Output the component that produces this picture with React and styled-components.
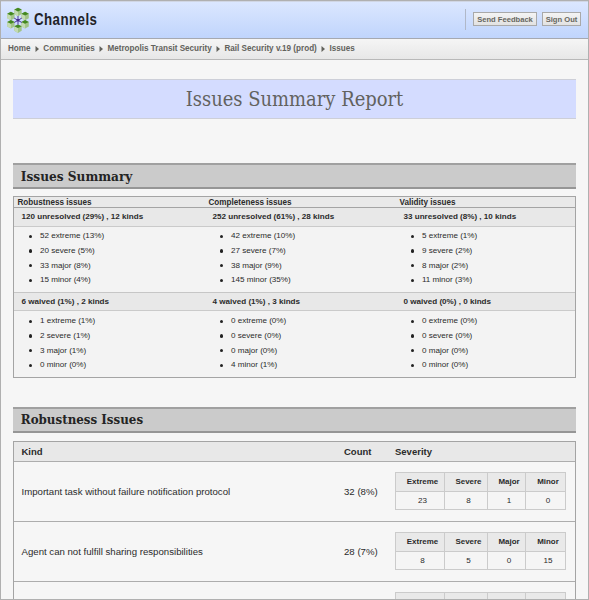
import React from 'react';
import styled, { createGlobalStyle } from 'styled-components';

const sans = '"Liberation Sans", Arial, sans-serif';
const serif = '"DejaVu Serif Condensed", "DejaVu Serif", serif';

const GlobalStyle = createGlobalStyle`
  * { box-sizing: border-box; }
  body { margin: 0; font-family: ${sans}; color: #2b2b2b; background: #f6f6f6; overflow: hidden; }
`;

const Page = styled.div`
  height: 600px;
  overflow: hidden;
  border: 1px solid #b0b0b0;
  background: #f6f6f6;
`;

const Header = styled.header`
  display: flex;
  align-items: center;
  height: 38px;
  padding: 0 7px 0 5px;
  border-top: 1px solid #d0d6e4;
  border-bottom: 1px solid #a6a9b0;
  background: linear-gradient(#dbe7ff, #c0d5fc);
`;

const Brand = styled.h1`
  margin: 0 auto 0 4px;
  width: 64px;
  font: bold 17px/20px ${sans};
  letter-spacing: 0.6px;
  color: #1f2328;
  transform: scaleX(0.78);
  transform-origin: 0 50%;
`;

const Actions = styled.div`
  display: flex;
  align-items: center;
  gap: 5px;
  height: 21px;
  margin-bottom: 2px;
  padding-left: 7px;
  border-left: 1px solid #b0b8c8;
`;

const Button = styled.button`
  width: ${p => p.$width}px;
  height: 14px;
  padding: 0;
  border: 1px solid #a9a9a9;
  background: linear-gradient(#f4f4f4, #e2e2e2);
  color: #66665f;
  font: bold 7.6px/11px ${sans};
  white-space: nowrap;
`;

const Breadcrumbs = styled.nav`
  display: flex;
  align-items: center;
  height: 21px;
  padding-left: 7px;
  border-bottom: 1px solid #b8b8b8;
  background: linear-gradient(#f5f5f5, #e7e7e7);
  color: #62625c;
  font: bold 8.15px/12px ${sans};
  white-space: nowrap;
`;

const Arrow = styled.svg`
  width: 4px;
  height: 6px;
  margin: 0 4.7px 0 4px;
  fill: #62625c;
`;

const Content = styled.main`
  padding: 19px 12px 0;
`;

const Title = styled.h2`
  height: 40px;
  margin: 0 0 44px;
  border: 1px solid #cdcfd8;
  border-width: 1px 0;
  background: #d4dcff;
  color: #62625e;
  font: 19.95px/39px ${serif};
  text-align: center;
`;

const SectionTitle = styled.h3`
  height: 26px;
  margin: 0 0 ${p => p.$gap}px;
  padding-left: 7.8px;
  border: solid #969696;
  border-width: 2px 0;
  border-top-color: #a0a0a0;
  background: #cbcbcb;
  color: #242424;
  font: bold ${p => p.$size}px/22px ${serif};
`;

const Summary = styled.section`
  height: 182px;
  margin-bottom: 29px;
  border: 1px solid #a4a4a4;
  background: #f3f3f3;
`;

const Columns = styled.div`
  display: grid;
  grid-template-columns: 191px 191px 1fr;
`;

const SummaryHead = styled(Columns)`
  height: 11px;
  padding-left: 3.5px;
  border-bottom: 1px solid #a4a4a4;
  background: #e9e9e9;
  font: bold 8.15px/11px ${sans};
`;

const Totals = styled(Columns)`
  height: 19px;
  padding-left: 7.5px;
  border-bottom: 1px solid #cacaca;
  border-top: ${p => (p.$divided ? '1px solid #c6c6c6' : '0')};
  background: #e8e8e8;
  font: bold 8.08px/18px ${sans};
`;

const Breakdown = styled(Columns)`
  height: ${p => p.$height}px;
  padding-top: ${p => p.$top}px;
`;

const List = styled.ul`
  margin: 0;
  padding: 0 0 0 15px;
  list-style: none;
`;

const Item = styled.li`
  display: flex;
  align-items: center;
  gap: 7.5px;
  height: 14.67px;
  font: 8.1px/14px ${sans};

  &::before {
    content: '';
    width: 3.4px;
    height: 3.4px;
    border-radius: 50%;
    background: #222;
  }
`;

const IssueTable = styled.section`
  border: solid #a4a4a4;
  border-width: 1px 1px 0;
`;

const IssueRow = styled.div`
  display: grid;
  grid-template-columns: 322.5px 51px 1fr;
  align-items: center;
  height: 60px;
  padding-left: 7.5px;
  border-bottom: 1px solid #adadad;
  font: 9.65px/14px ${sans};
`;

const IssueHead = styled(IssueRow)`
  height: 20px;
  background: #e8e8e8;
  font-weight: bold;
  font-size: 9.5px;
`;

const SeverityTable = styled.div`
  display: grid;
  grid-template-columns: 49px 43px 38px 40px;
  grid-template-rows: 19px 18px;
  width: 171px;
  margin-bottom: 1px;
  border: solid #cbcbcb;
  border-width: 1px 0 0 1px;
`;

const Cell = styled.span`
  padding-left: 5px;
  border: solid #cbcbcb;
  border-width: 0 1px 1px 0;
  background: ${p => (p.$head ? '#e9e9e9' : '#f5f5f5')};
  font: ${p => (p.$head ? 'bold 7.95px' : '8.1px')}/18px ${sans};
  text-align: center;
`;

const LogoMark = styled.svg`
  width: 24px;
  height: 27px;
`;

const cubes = [[12, 4.9], [4.9, 9], [19.1, 9], [4.9, 17.2], [19.1, 17.2], [12, 21.6]];

const Logo = () => (
  <LogoMark viewBox="0 0 24 27">
    {cubes.map(([x, y]) => (
      <g key={`${x}-${y}`} transform={`translate(${x} ${y})`}>
        <path d="M0-4.2 3.7-2.3V2.2L0 4.3-3.7 2.2v-4.5z" fill="#a1c488" />
        <path d="M-3.7-2.3 0-.5V4.3l-3.7-2.1z" fill="#c3dab2" />
        <path d="M0-4.2 3.7-2.3 0-.5-3.7-2.3z" fill="#438821" />
      </g>
    ))}
    <path d="M12 9v8.6M8.2 11.1l7.6 4.4M15.8 11.1l-7.6 4.4" stroke="#4b359c" strokeWidth="1" />
    <circle cx="12" cy="13.3" r="1.3" fill="#40288d" />
  </LogoMark>
);

const crumbs = ['Home', 'Communities', 'Metropolis Transit Security', 'Rail Security v.19 (prod)', 'Issues'];

const unresolved = {
  totals: ['120 unresolved (29%) , 12 kinds', '252 unresolved (61%) , 28 kinds', '33 unresolved (8%) , 10 kinds'],
  lists: [
    ['52 extreme (13%)', '20 severe (5%)', '33 major (8%)', '15 minor (4%)'],
    ['42 extreme (10%)', '27 severe (7%)', '38 major (9%)', '145 minor (35%)'],
    ['5 extreme (1%)', '9 severe (2%)', '8 major (2%)', '11 minor (3%)'],
  ],
};

const waived = {
  totals: ['6 waived (1%) , 2 kinds', '4 waived (1%) , 3 kinds', '0 waived (0%) , 0 kinds'],
  lists: [
    ['1 extreme (1%)', '2 severe (1%)', '3 major (1%)', '0 minor (0%)'],
    ['0 extreme (0%)', '0 severe (0%)', '0 major (0%)', '4 minor (1%)'],
    ['0 extreme (0%)', '0 severe (0%)', '0 major (0%)', '0 minor (0%)'],
  ],
};

const issues = [
  { kind: 'Important task without failure notification protocol', count: '32 (8%)', levels: [23, 8, 1, 0] },
  { kind: 'Agent can not fulfill sharing responsibilities', count: '28 (7%)', levels: [8, 5, 0, 15] },
  { kind: '', count: '', levels: ['', '', '', ''] },
];

const severities = ['Extreme', 'Severe', 'Major', 'Minor'];

const SummaryGroup = ({ data, divided, height, top }) => (
  <>
    <Totals $divided={divided}>
      {data.totals.map(t => <span key={t}>{t}</span>)}
    </Totals>
    <Breakdown $height={height} $top={top}>
      {data.lists.map((items, i) => (
        <List key={i}>
          {items.map(item => <Item key={item}>{item}</Item>)}
        </List>
      ))}
    </Breakdown>
  </>
);

const Severity = ({ levels, labelled }) => (
  <SeverityTable>
    {severities.map(name => <Cell $head key={name}>{labelled ? name : ''}</Cell>)}
    {levels.map((n, i) => <Cell key={i}>{n}</Cell>)}
  </SeverityTable>
);

export default function App() {
  return (
    <Page>
      <GlobalStyle />
      <Header>
        <Logo />
        <Brand>Channels</Brand>
        <Actions>
          <Button $width={64}>Send Feedback</Button>
          <Button $width={39}>Sign Out</Button>
        </Actions>
      </Header>
      <Breadcrumbs>
        {crumbs.map((c, i) => (
          <React.Fragment key={c}>
            {i > 0 && <Arrow viewBox="0 0 4 6"><path d="M.5 0 4 3 .5 6z" /></Arrow>}
            <span>{c}</span>
          </React.Fragment>
        ))}
      </Breadcrumbs>
      <Content>
        <Title>Issues Summary Report</Title>
        <SectionTitle $gap={7} $size={13.5}>Issues Summary</SectionTitle>
        <Summary>
          <SummaryHead>
            <span>Robustness issues</span>
            <span>Completeness issues</span>
            <span>Validity issues</span>
          </SummaryHead>
          <SummaryGroup data={unresolved} height={65} top={2} />
          <SummaryGroup data={waived} divided height={66} top={3} />
        </Summary>
        <SectionTitle $gap={8} $size={13.2}>Robustness Issues</SectionTitle>
        <IssueTable>
          <IssueHead>
            <span>Kind</span>
            <span>Count</span>
            <span>Severity</span>
          </IssueHead>
          {issues.map((issue, i) => (
            <IssueRow key={i}>
              <span>{issue.kind}</span>
              <span>{issue.count}</span>
              <Severity levels={issue.levels} labelled={issue.kind !== ''} />
            </IssueRow>
          ))}
        </IssueTable>
      </Content>
    </Page>
  );
}
